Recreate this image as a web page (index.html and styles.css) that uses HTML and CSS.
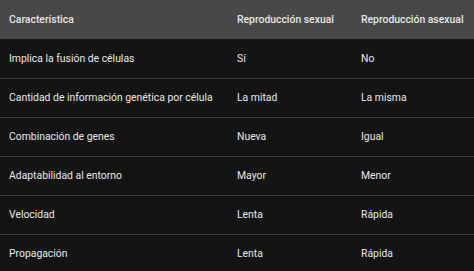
FILE: index.html
```html
<!DOCTYPE html>
<html lang="es">
<head>
<meta charset="utf-8">
<link rel="stylesheet" href="styles.css">
</head>
<body>
<table class="tbl">
  <thead>
    <tr><th class="c1">Característica</th><th class="c2">Reproducción sexual</th><th class="c3">Reproducción asexual</th></tr>
  </thead>
  <tbody>
    <tr><td>Implica la fusión de células</td><td>Sí</td><td>No</td></tr>
    <tr><td>Cantidad de información genética por célula</td><td>La mitad</td><td>La misma</td></tr>
    <tr><td>Combinación de genes</td><td>Nueva</td><td>Igual</td></tr>
    <tr><td>Adaptabilidad al entorno</td><td>Mayor</td><td>Menor</td></tr>
    <tr><td>Velocidad</td><td>Lenta</td><td>Rápida</td></tr>
    <tr><td>Propagación</td><td>Lenta</td><td>Rápida</td></tr>
  </tbody>
</table>
</body>
</html>
```
FILE: styles.css
```css
html, body {
  margin: 0;
  padding: 0;
  background: #141414;
}
body {
  width: 474px;
  height: 271px;
  overflow: hidden;
  font-family: Roboto, "Liberation Sans", sans-serif;
  font-size: 10.4px;
}
.tbl {
  width: 474px;
  border-collapse: collapse;
  table-layout: fixed;
}
.c1 { width: 228px; }
.c2 { width: 124px; }
.c3 { width: 122px; }
th {
  background: #474847;
  color: #e6e6e6;
  font-weight: 500;
  text-align: left;
  height: 39px;
  padding: 0 9px;
  box-sizing: border-box;
  white-space: nowrap;
}
td {
  color: #e8e8e8;
  height: 39px;
  padding: 0 9px;
  box-sizing: border-box;
  border-top: 1px solid #3a3a3a;
  white-space: nowrap;
}
tbody tr:first-child td { border-top: none; }
```
